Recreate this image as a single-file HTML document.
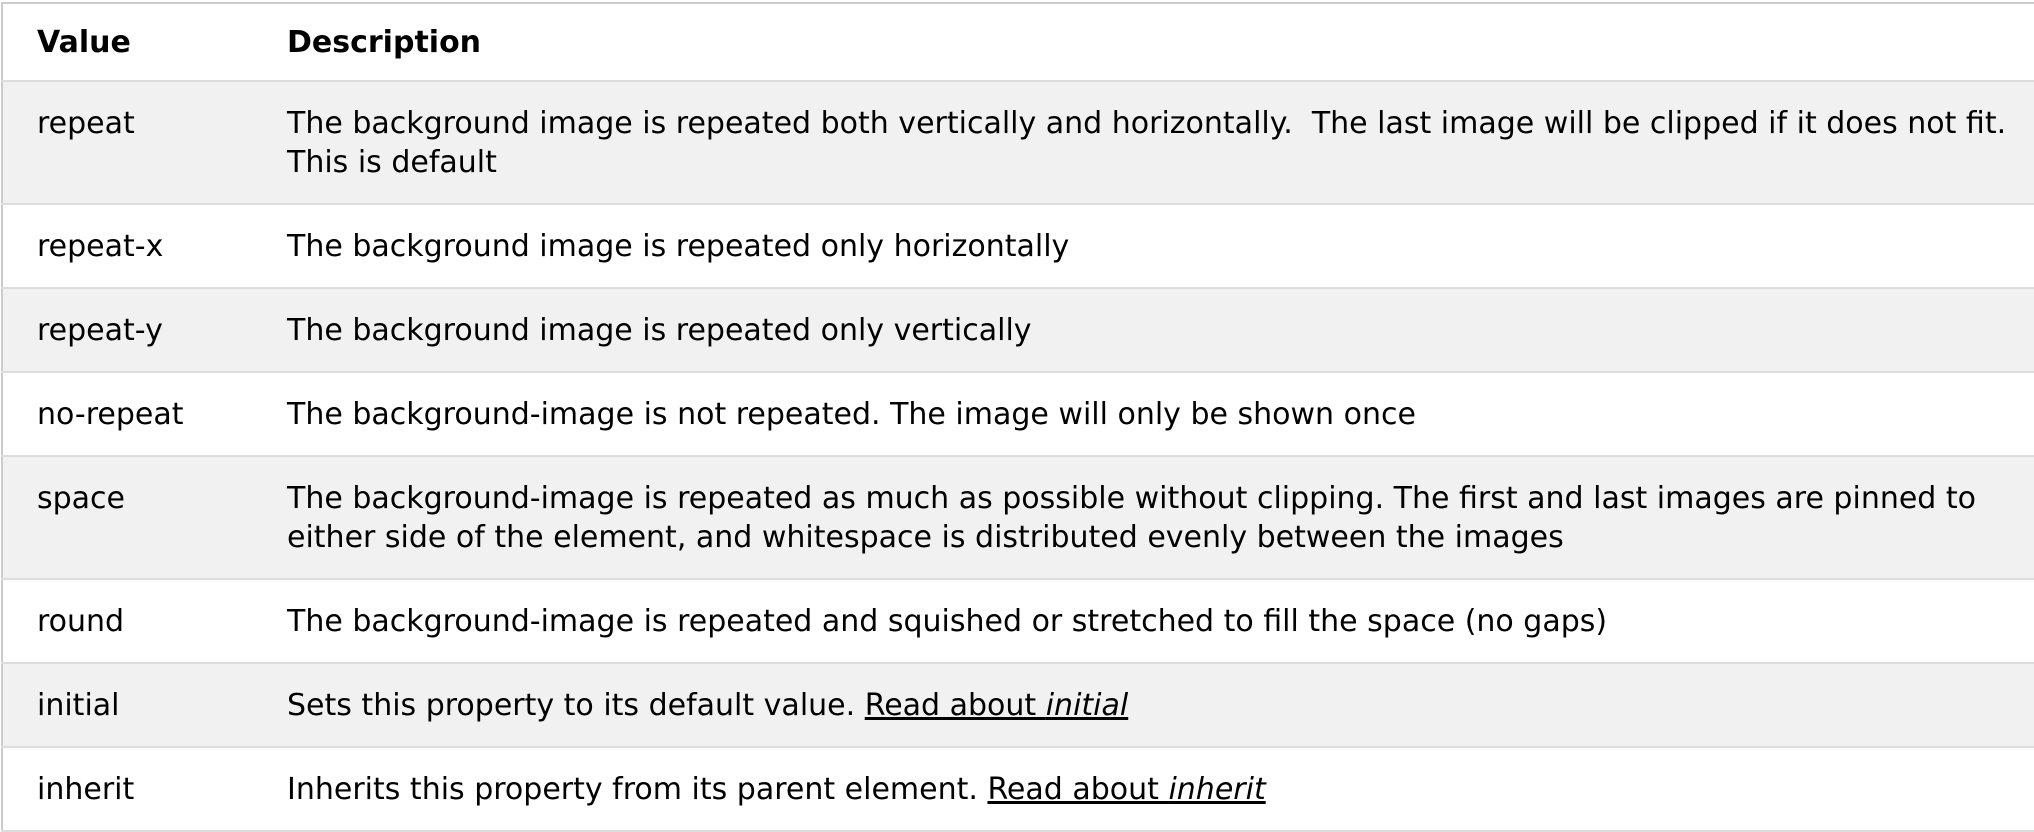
<!DOCTYPE html>
<html><head><style>
html,body{margin:0;padding:0;background:#fff;width:2034px;height:826px;overflow:hidden}
table{position:absolute;left:1px;top:2px;width:2100px;border-collapse:collapse;border-left:2px solid #ccc;border-top:2px solid #ccc;font-family:"DejaVu Sans","Liberation Sans",sans-serif;font-size:30px;color:#000}
td,th{text-align:left;vertical-align:top;padding:0;line-height:39px;border-bottom:2px solid #ddd}
th{font-weight:bold;height:76px;vertical-align:middle}
td{padding-top:22px;padding-bottom:21px}
td:first-child,th:first-child{padding-left:34px;width:250px}
tr:nth-child(even){background:#f1f1f1}
a{color:#000;text-decoration:underline}
</style></head><body>
<table>
<tr><th>Value</th><th>Description</th></tr>
<tr><td>repeat</td><td>The background image is repeated both vertically and horizontally.&nbsp; The last image will be clipped if it does not fit.<br>This is default</td></tr>
<tr><td>repeat-x</td><td>The background image is repeated only horizontally</td></tr>
<tr><td>repeat-y</td><td>The background image is repeated only vertically</td></tr>
<tr><td>no-repeat</td><td>The background-image is not repeated. The image will only be shown once</td></tr>
<tr><td>space</td><td>The background-image is repeated as much as possible without clipping. The first and last images are pinned to<br>either side of the element, and whitespace is distributed evenly between the images</td></tr>
<tr><td>round</td><td>The background-image is repeated and squished or stretched to fill the space (no gaps)</td></tr>
<tr><td>initial</td><td>Sets this property to its default value. <a>Read about <i>initial</i></a></td></tr>
<tr><td>inherit</td><td>Inherits this property from its parent element. <a>Read about <i>inherit</i></a></td></tr>
</table>
</body></html>
